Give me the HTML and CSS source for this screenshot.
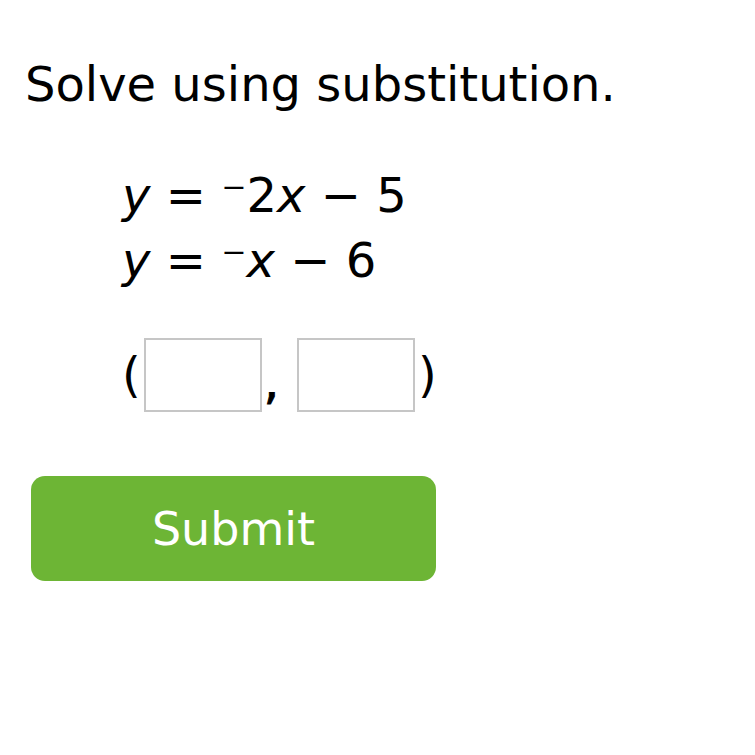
FILE: index.html
```html
<!DOCTYPE html>
<html>
<head>
<meta charset="utf-8">
<link rel="stylesheet" href="styles.css">
</head>
<body>
<div class="page">
  <h1 class="title">Solve using substitution.</h1>
  <div class="system">
    <div class="eq"><i>y</i> = <span class="neg">&#8315;</span>2<i>x</i> &minus; 5</div>
    <div class="eq"><i>y</i> = <span class="neg">&#8315;</span><i>x</i> &minus; 6</div>
  </div>
  <div class="answer">
    <span class="paren">(</span><span class="box"></span><span class="comma">,</span><span class="box"></span><span class="paren">)</span>
  </div>
  <button class="submit">Submit</button>
</div>
</body>
</html>
```
FILE: styles.css
```css
html, body { margin: 0; padding: 0; background: #fff; }
body { font-family: "DejaVu Sans", Verdana, sans-serif; color: #000; }
.page { padding: 56px 0 0 25px; }
.title { font-size: 48px; font-weight: normal; margin: 0; line-height: 56px; }
.system { margin: 51px 0 0 97px; }
.eq { font-size: 48px; line-height: 65px; white-space: pre; }
.eq i { font-style: oblique; }
.answer { display: flex; align-items: center; margin: 44px 0 0 97px; font-size: 48px; height: 75px; }
.box { display: inline-block; width: 114px; height: 70px; border: 2px solid #c6c6c6; }
.paren { line-height: 1; }
.paren:first-child { margin-right: 3px; }
.box + .paren { margin-left: 3px; }
.comma { margin: 12px 18px 0 2px; line-height: 1; -webkit-text-stroke: 1px #000; }
.submit { display: block; margin: 64px 0 0 6px; width: 405px; height: 105px; background: #6db535; border: none; border-radius: 14px; color: #fff; font-family: "DejaVu Sans", Verdana, sans-serif; font-size: 46px; padding: 0; }
```
